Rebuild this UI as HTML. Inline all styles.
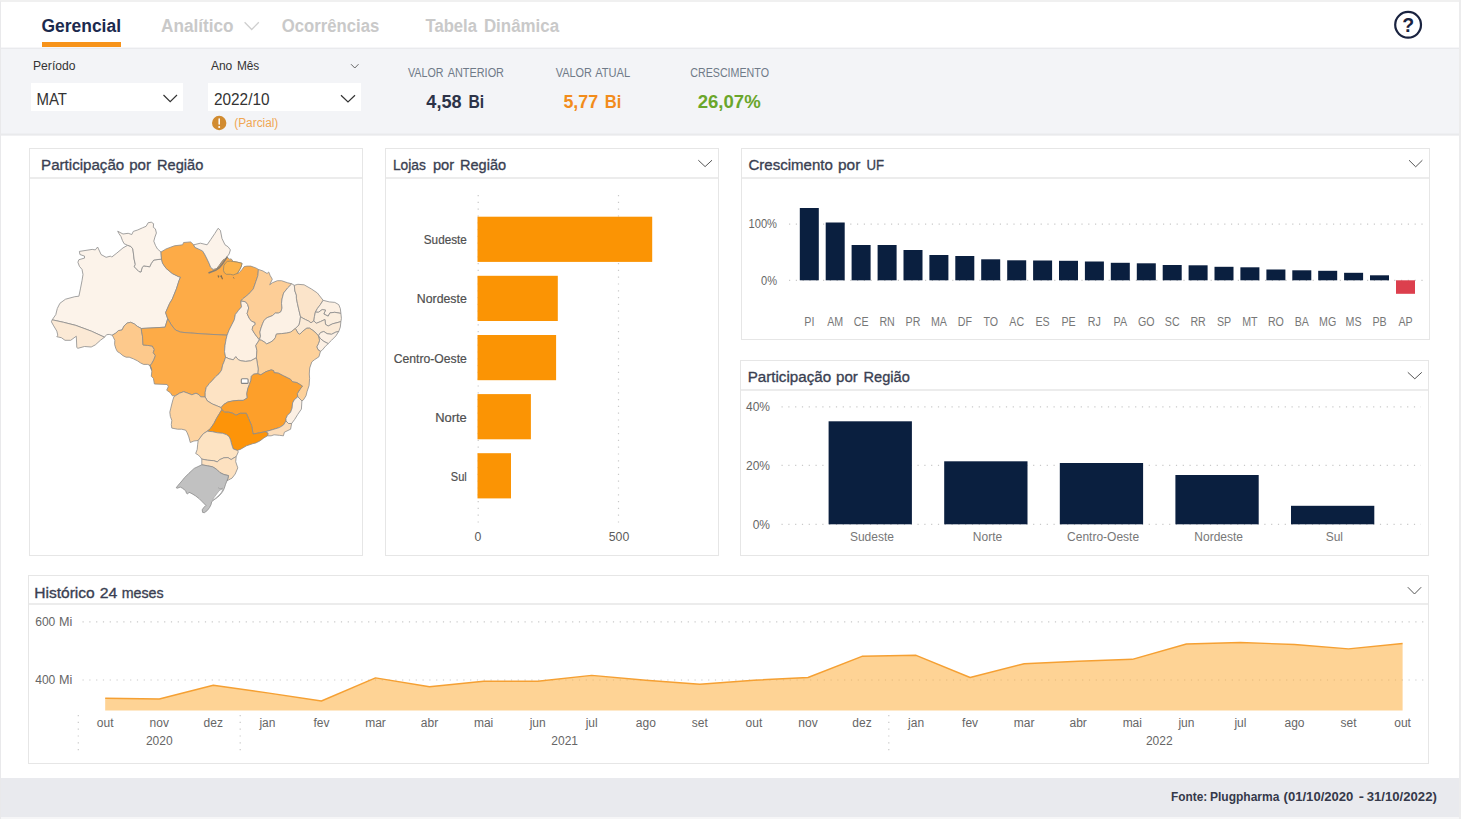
<!DOCTYPE html>
<html lang="pt-BR">
<head>
<meta charset="utf-8">
<title>Gerencial</title>
<style>
*{box-sizing:border-box;margin:0;padding:0}
html,body{width:1461px;height:819px;overflow:hidden;background:#fff}
body{font-family:"Liberation Sans", sans-serif;position:relative;color:#333}
.abs{position:absolute}
#frame{position:absolute;left:0;top:0;width:1461px;height:819px;border-top:2px solid #f0f0f0;border-left:1px solid #e9e9eb;z-index:50}
#redge{position:absolute;left:1459px;top:0;width:2px;height:819px;background:#ececed;z-index:51}
#band{position:absolute;left:0;top:47px;width:1461px;height:89px;background:#f3f4f7}
#band i{position:absolute;left:0;width:1461px;height:1px;display:block}
#footer{position:absolute;left:0;top:777.5px;width:1461px;height:39.5px;background:#e9eaee}
#bedge{position:absolute;left:0;top:817px;width:1461px;height:2px;background:#f6f6f7}
.dd{position:absolute;background:#fff;height:28px;top:83px}
.panel{position:absolute;border:1px solid #e6e6e6;background:#fff}
.ptitle{position:absolute;left:0;top:0;right:0;height:30px;border-bottom:2px solid #ececec}
svg{position:absolute;left:0;top:0;overflow:visible}
svg text{font-family:"Liberation Sans", sans-serif;white-space:pre}
</style>
</head>
<body>
<div class="abs" style="left:42px;top:42px;width:79px;height:5px;background:#f7931a"></div>
<div id="band"><i style="top:0;background:#f6f6f8"></i><i style="top:1px;background:#e9eaed"></i><i style="top:86px;background:#eeeff2"></i><i style="top:87px;background:#e9eaec"></i><i style="top:88px;background:#f1f1f3"></i></div>
<div class="dd" style="left:31px;width:152px"></div>
<div class="dd" style="left:208px;width:153px"></div>
<div class="panel" style="left:29px;top:148px;width:334px;height:408px"><div class="ptitle"></div></div>
<div class="panel" style="left:385px;top:148px;width:334px;height:408px"><div class="ptitle"></div></div>
<div class="panel" style="left:741px;top:148px;width:689px;height:192px"><div class="ptitle"></div></div>
<div class="panel" style="left:740px;top:360px;width:689px;height:196px"><div class="ptitle"></div></div>
<div class="panel" style="left:28px;top:575px;width:1401px;height:189px"><div class="ptitle" style="height:29px"></div></div>
<div id="footer"></div><div id="bedge"></div>
<svg width="1461" height="819" viewBox="0 0 1461 819">
<g stroke="#8c8c8c" stroke-width="0.8" stroke-linejoin="round">
<path d="M52.2,319.8 L55.8,314.6 L57.3,308.5 L59.9,303.3 L65.5,299.2 L74.8,296.7 L78.9,296.2 L80.4,288.9 L82.0,280.7 L83.0,274.5 L82.0,269.4 L79.4,266.3 L77.9,262.2 L78.9,259.7 L84.5,258.1 L84.5,256.1 L79.9,254.5 L79.4,251.4 L92.2,249.4 L95.3,249.9 L97.6,247.0 L100.4,253.0 L101.0,254.5 L106.1,257.3 L110.7,256.1 L111.7,257.1 L116.9,253.0 L123.0,247.9 L127.6,245.3 L130.7,246.3 L132.8,248.9 L133.5,254.0 L134.1,259.1 L135.3,264.3 L134.3,266.8 L136.4,268.9 L138.9,271.5 L141.0,272.0 L142.0,267.9 L143.6,265.8 L146.6,266.3 L149.7,266.8 L151.3,263.3 L153.8,260.0 L161.5,259.1 L162.6,263.3 L166.1,268.4 L172.3,273.5 L178.5,276.6 L180.5,277.1 L179.0,280.7 L176.4,288.9 L172.3,299.0 L169.7,303.3 L165.6,312.6 L167.7,318.7 L165.1,327.2 L141.3,328.5 L137.4,326.4 L134.3,323.9 L130.7,322.3 L127.1,323.1 L124.1,325.9 L122.0,330.0 L118.4,330.6 L115.8,333.1 L112.2,335.2 L109.2,334.4 L106.6,334.7 L104.5,337.2 L91.2,331.1 L75.8,325.4 L63.5,322.3 L52.2,319.8Z" fill="#fcf3ea"/>
<path d="M127.6,245.3 L124.1,243.7 L122.5,240.7 L121.0,236.6 L118.9,233.5 L117.7,231.2 L123.0,234.0 L128.2,233.3 L131.8,234.5 L133.3,231.4 L137.9,229.9 L142.5,227.8 L146.1,226.3 L148.2,222.7 L151.3,222.2 L153.6,223.7 L153.3,227.3 L155.4,228.9 L156.4,233.0 L154.9,237.1 L153.8,241.2 L155.4,245.3 L157.4,248.9 L161.0,252.0 L161.5,259.1 L153.8,260.0 L151.3,263.3 L149.7,266.8 L146.6,266.3 L143.6,265.8 L142.0,267.9 L141.0,272.0 L138.9,271.5 L136.4,268.9 L134.3,266.8 L135.3,264.3 L134.1,259.1 L133.5,254.0 L132.8,248.9 L130.7,246.3 L127.6,245.3Z" fill="#fcf3ea"/>
<path d="M52.2,319.8 L63.5,322.3 L75.8,325.4 L91.2,331.1 L104.5,337.2 L100.4,340.3 L95.3,344.9 L91.2,347.0 L84.5,346.5 L77.9,348.3 L76.8,347.5 L76.3,336.2 L70.7,340.3 L65.0,340.3 L61.4,337.7 L56.8,336.7 L57.8,335.2 L56.8,331.1 L53.7,325.9 L51.4,321.8 L52.2,319.8Z" fill="#fbe9d5"/>
<path d="M112.2,335.2 L115.8,333.1 L118.4,330.6 L122.0,330.0 L124.1,325.9 L127.1,323.1 L130.7,322.3 L134.3,323.9 L137.4,326.4 L141.3,328.5 L141.5,331.1 L142.5,336.2 L143.0,344.9 L147.7,345.4 L152.3,346.0 L154.3,349.5 L153.3,352.6 L155.4,355.7 L153.8,359.8 L151.8,363.4 L150.2,365.5 L147.7,364.4 L143.6,364.4 L140.5,362.9 L137.4,360.8 L133.3,358.8 L129.2,357.2 L126.1,357.2 L123.0,355.7 L119.9,353.1 L117.4,351.6 L115.8,348.5 L114.6,344.4 L114.8,340.3 L113.3,337.2 L112.2,335.2Z" fill="#fdc98c"/>
<path d="M161.0,252.0 L166.1,248.9 L174.4,245.8 L182.6,244.8 L183.6,242.5 L190.8,241.9 L191.2,242.5 L193.7,244.8 L194.8,247.3 L198.3,248.9 L202.5,250.9 L204.5,254.0 L206.6,258.1 L209.1,263.3 L210.7,267.4 L213.2,269.4 L217.1,266.5 L220.5,261.6 L223.4,258.2 L226.4,256.2 L229.3,259.2 L231.2,258.9 L233.2,261.5 L237.1,262.1 L242.0,263.3 L241.4,266.0 L240.1,268.9 L238.2,271.9 L237.0,273.7 L239.1,272.6 L241.9,269.7 L244.2,266.6 L246.9,266.1 L250.7,266.1 L255.8,267.9 L258.4,269.4 L257.9,275.6 L255.8,281.7 L253.3,288.9 L248.7,294.1 L242.5,299.0 L241.0,300.8 L241.0,303.3 L241.5,306.9 L238.4,310.5 L235.3,314.6 L234.3,319.8 L231.7,324.9 L229.1,330.0 L227.1,335.2 L205.5,334.1 L185.0,332.6 L180.5,332.1 L175.4,330.0 L171.3,324.9 L167.7,318.7 L165.6,312.6 L169.7,303.3 L172.3,299.0 L176.4,288.9 L179.0,280.7 L180.5,277.1 L178.5,276.6 L172.3,273.5 L166.1,268.4 L162.6,263.3 L161.5,259.1 L161.0,252.0Z" fill="#fdab47"/>
<path d="M193.7,244.8 L200.4,243.2 L207.1,244.8 L210.7,239.6 L214.8,233.5 L218.1,228.3 L220.4,230.4 L222.0,238.6 L225.0,244.8 L228.1,246.8 L230.4,249.9 L229.1,254.0 L226.1,258.1 L223.0,260.2 L219.9,265.3 L216.8,268.4 L213.2,269.4 L210.7,267.4 L209.1,263.3 L206.6,258.1 L204.5,254.0 L202.5,250.9 L198.3,248.9 L194.8,247.3 L193.7,244.8Z" fill="#fcf3ea"/>
<path d="M141.3,328.5 L165.1,327.2 L167.7,318.7 L171.3,324.9 L175.4,330.0 L180.5,332.1 L185.0,332.6 L205.5,334.1 L227.1,335.2 L226.1,339.3 L225.0,345.4 L224.5,351.6 L225.6,357.2 L224.0,361.9 L222.7,364.9 L221.6,370.1 L219.1,373.7 L215.5,376.8 L212.4,380.4 L209.3,383.5 L206.2,387.6 L205.2,392.2 L205.2,397.0 L200.6,396.8 L199.1,394.8 L196.0,393.2 L191.9,394.8 L187.8,393.2 L183.7,391.7 L179.5,393.2 L175.4,395.8 L172.4,395.8 L170.3,392.7 L166.7,390.2 L168.3,386.6 L167.2,384.5 L154.4,384.0 L153.4,378.3 L151.3,376.3 L151.8,371.2 L149.8,365.0 L151.8,370.1 L150.2,365.5 L151.8,363.4 L153.8,359.8 L155.4,355.7 L153.3,352.6 L154.3,349.5 L152.3,346.0 L147.7,345.4 L143.0,344.9 L142.5,336.2 L141.5,331.1 L141.3,328.5Z" fill="#fdab47"/>
<path d="M241.0,300.8 L241.0,303.3 L241.5,306.9 L238.4,310.5 L235.3,314.6 L234.3,319.8 L231.7,324.9 L229.1,330.0 L227.1,335.2 L226.1,339.3 L225.0,345.4 L224.5,351.6 L225.6,357.2 L229.1,358.8 L233.3,359.8 L235.8,356.7 L238.4,359.8 L241.0,360.8 L245.6,361.4 L250.7,360.8 L256.4,357.8 L256.9,350.6 L255.8,345.4 L259.4,339.8 L256.9,336.7 L254.3,333.1 L252.2,329.5 L252.8,326.4 L255.3,324.4 L254.8,322.3 L251.7,321.3 L249.2,318.2 L247.1,313.6 L248.7,308.0 L247.6,304.4 L245.6,301.8 L241.0,300.8Z" fill="#fdf0e2"/>
<path d="M258.4,269.4 L263.0,271.0 L267.1,273.5 L268.7,272.0 L270.2,275.6 L272.3,279.2 L269.7,284.8 L272.3,282.8 L277.4,280.7 L281.5,280.7 L287.7,282.8 L291.8,283.8 L287.7,287.9 L283.6,293.0 L282.0,299.0 L281.5,303.3 L282.0,308.0 L281.0,311.6 L278.4,313.1 L275.3,313.1 L272.3,315.7 L267.1,317.7 L264.1,320.3 L262.5,323.9 L261.0,328.0 L259.9,332.1 L260.5,336.2 L259.4,339.8 L256.9,336.7 L254.3,333.1 L252.2,329.5 L252.8,326.4 L255.3,324.4 L254.8,322.3 L251.7,321.3 L249.2,318.2 L247.1,313.6 L248.7,308.0 L247.6,304.4 L245.6,301.8 L241.0,300.8 L242.5,299.0 L248.7,294.1 L253.3,288.9 L255.8,281.7 L257.9,275.6 L258.4,269.4Z" fill="#fdce97"/>
<path d="M291.8,283.8 L294.3,285.3 L294.9,291.0 L296.4,295.1 L296.4,298.2 L297.4,303.3 L299.0,310.5 L300.5,316.7 L300.0,320.8 L299.0,324.9 L295.4,328.5 L290.7,332.1 L286.6,333.1 L281.5,333.6 L276.4,334.1 L275.3,337.7 L273.3,340.3 L270.2,342.4 L266.6,343.9 L264.1,341.8 L261.5,340.3 L259.4,339.8 L260.5,336.2 L259.9,332.1 L261.0,328.0 L262.5,323.9 L264.1,320.3 L267.1,317.7 L272.3,315.7 L275.3,313.1 L278.4,313.1 L281.0,311.6 L282.0,308.0 L281.5,303.3 L282.0,299.0 L283.6,293.0 L287.7,287.9 L291.8,283.8Z" fill="#fcf1e5"/>
<path d="M294.3,285.3 L297.9,284.3 L304.1,284.8 L311.3,288.9 L317.4,293.0 L323.1,300.3 L320.5,304.4 L317.4,308.5 L315.4,312.1 L314.4,316.7 L313.9,320.8 L311.0,322.8 L308.5,321.0 L305.5,319.6 L302.8,318.2 L300.5,316.7 L299.0,310.5 L297.4,303.3 L296.4,298.2 L296.4,295.1 L294.9,291.0 L294.3,285.3Z" fill="#fbe4ca"/>
<path d="M323.1,300.3 L329.3,301.9 L334.8,302.4 L338.7,304.6 L340.3,308.5 L340.9,313.4 L334.8,312.3 L329.9,312.9 L328.2,316.2 L323.8,314.0 L325.5,310.1 L322.2,309.6 L318.4,312.3 L315.4,312.1 L317.4,308.5 L320.5,304.4 L323.1,300.3Z" fill="#fcf0e3"/>
<path d="M315.4,312.1 L318.4,312.3 L322.2,309.6 L325.5,310.1 L323.8,314.0 L328.2,316.2 L329.9,312.9 L334.8,312.3 L340.9,313.4 L341.4,318.4 L340.9,321.6 L337.0,322.7 L332.6,323.8 L328.2,326.0 L325.5,324.4 L324.9,319.5 L320.5,321.6 L316.2,323.3 L313.9,320.8 L314.4,316.7 L315.4,312.1Z" fill="#fbeede"/>
<path d="M313.9,320.8 L316.2,323.3 L320.5,321.6 L324.9,319.5 L325.5,324.4 L328.2,326.0 L332.6,323.8 L337.0,322.7 L340.9,321.6 L340.3,327.1 L338.7,331.5 L335.9,332.1 L331.5,334.3 L327.1,333.7 L323.8,331.5 L320.5,332.6 L318.4,335.9 L316.2,333.2 L312.9,330.4 L309.6,328.2 L306.8,328.2 L303.0,331.0 L299.7,334.3 L298.0,333.2 L295.4,328.5 L299.0,324.9 L300.0,320.8 L300.5,316.7 L302.8,318.2 L305.5,319.6 L308.5,321.0 L311.0,322.8 L313.9,320.8Z" fill="#fbead6"/>
<path d="M318.4,335.9 L320.5,332.6 L323.8,331.5 L327.1,333.7 L331.5,334.3 L335.9,332.1 L338.7,331.5 L335.9,335.9 L331.5,340.3 L328.2,343.6 L323.8,341.4 L320.5,338.7 L318.4,335.9Z" fill="#fcf0e4"/>
<path d="M318.4,335.9 L320.5,338.7 L323.8,341.4 L328.2,343.6 L324.9,346.9 L322.2,350.2 L320.5,351.3 L318.4,350.2 L316.7,346.9 L318.4,343.6 L319.5,340.3 L318.4,335.9Z" fill="#fcf0e4"/>
<path d="M259.4,339.8 L261.5,340.3 L264.1,341.8 L266.6,343.9 L270.2,342.4 L273.3,340.3 L275.3,337.7 L276.4,334.1 L281.5,333.6 L286.6,333.1 L290.7,332.1 L295.4,328.5 L298.0,333.2 L299.7,334.3 L303.0,331.0 L306.8,328.2 L309.6,328.2 L312.9,330.4 L316.2,333.2 L318.4,335.9 L319.5,340.3 L318.4,343.6 L316.7,346.9 L318.4,350.2 L320.5,351.3 L318.9,356.8 L314.4,359.8 L311.8,361.9 L309.7,368.0 L309.3,374.0 L309.6,378.3 L309.1,385.5 L307.0,391.7 L306.0,395.8 L303.4,399.9 L301.9,400.9 L297.8,396.8 L297.2,393.7 L299.8,389.6 L302.4,386.0 L300.8,385.0 L296.7,382.5 L292.6,381.9 L290.6,379.4 L287.5,377.8 L283.4,375.8 L278.3,373.2 L274.1,372.7 L273.6,370.6 L271.1,369.9 L265.9,371.7 L260.8,374.8 L257.7,373.7 L258.2,369.1 L257.4,363.9 L256.4,357.8 L256.9,350.6 L255.8,345.4 L259.4,339.8Z" fill="#fdd19b"/>
<path d="M256.4,357.8 L250.7,360.8 L245.6,361.4 L241.0,360.8 L238.4,359.8 L235.8,356.7 L233.3,359.8 L229.1,358.8 L225.6,357.2 L224.0,361.9 L222.7,364.9 L221.6,370.1 L219.1,373.7 L215.5,376.8 L212.4,380.4 L209.3,383.5 L206.2,387.6 L205.2,392.2 L205.2,397.0 L207.3,400.9 L212.4,404.0 L217.5,406.1 L221.1,407.6 L223.7,404.5 L227.8,402.0 L232.9,400.9 L238.1,400.4 L243.2,400.4 L247.3,397.9 L246.8,393.7 L247.8,388.6 L249.4,384.5 L250.9,380.4 L251.4,376.3 L253.5,374.2 L257.7,373.7 L258.2,369.1 L257.4,363.9 L256.4,357.8Z" fill="#fde3c4"/>
<path d="M175.4,395.8 L179.5,393.2 L183.7,391.7 L187.8,393.2 L191.9,394.8 L196.0,393.2 L199.1,394.8 L200.6,396.8 L205.2,397.0 L207.3,400.9 L212.4,404.0 L217.5,406.1 L221.1,407.6 L221.8,409.7 L219.6,413.3 L216.5,418.4 L213.9,423.5 L210.3,428.7 L207.3,431.2 L203.2,433.8 L200.1,437.9 L198.2,440.5 L193.9,441.0 L190.3,442.5 L188.8,436.9 L187.2,432.8 L185.7,430.2 L181.6,429.2 L177.5,429.2 L171.8,428.1 L171.3,424.5 L171.8,420.4 L170.3,416.3 L169.8,412.2 L170.8,408.1 L171.8,404.0 L172.9,399.9 L173.9,396.8 L175.4,395.8Z" fill="#fdd3a0"/>
<path d="M257.7,373.7 L253.5,374.2 L251.4,376.3 L250.9,380.4 L249.4,384.5 L247.8,388.6 L246.8,393.7 L247.3,397.9 L243.2,400.4 L238.1,400.4 L232.9,400.9 L227.8,402.0 L223.7,404.5 L221.1,407.6 L221.8,409.7 L224.7,412.2 L228.8,412.2 L232.9,413.3 L236.0,415.3 L240.1,413.3 L246.3,413.3 L248.5,418.4 L251.6,425.6 L253.1,434.0 L259.8,432.8 L265.4,431.7 L269.0,430.7 L274.1,429.2 L279.3,427.6 L283.4,425.1 L286.0,421.0 L286.0,418.4 L287.5,415.3 L290.6,412.2 L292.1,408.1 L292.6,403.0 L294.2,399.9 L297.8,396.8 L297.2,393.7 L299.8,389.6 L302.4,386.0 L300.8,385.0 L296.7,382.5 L292.6,381.9 L290.6,379.4 L287.5,377.8 L283.4,375.8 L278.3,373.2 L274.1,372.7 L273.6,370.6 L271.1,369.9 L265.9,371.7 L260.8,374.8 L257.7,373.7Z" fill="#fd9f2a"/>
<path d="M297.8,396.8 L301.9,400.9 L301.4,409.1 L297.8,414.3 L294.7,419.4 L291.6,423.5 L288.5,423.5 L286.0,421.0 L286.0,418.4 L287.5,415.3 L290.6,412.2 L292.1,408.1 L292.6,403.0 L294.2,399.9 L297.8,396.8Z" fill="#fcf0e4"/>
<path d="M286.0,421.0 L283.4,425.1 L279.3,427.6 L274.1,429.2 L269.0,430.7 L265.4,431.7 L268.0,433.3 L267.5,435.8 L271.1,435.8 L274.1,434.8 L279.3,435.3 L283.4,435.8 L284.4,432.2 L290.6,429.2 L291.6,423.5 L288.5,423.5 L286.0,421.0Z" fill="#fcddba"/>
<path d="M207.3,431.2 L210.3,428.7 L213.9,423.5 L216.5,418.4 L219.6,413.3 L221.8,409.7 L224.7,412.2 L228.8,412.2 L232.9,413.3 L236.0,415.3 L240.1,413.3 L246.3,413.3 L248.5,418.4 L251.6,425.6 L253.1,434.0 L259.8,432.8 L265.4,431.7 L268.0,433.3 L267.5,435.8 L263.9,437.9 L259.8,441.0 L255.7,443.0 L252.7,443.7 L246.5,445.8 L240.3,449.4 L237.3,450.4 L233.2,448.9 L231.6,444.2 L230.6,440.1 L229.3,436.9 L226.8,434.8 L222.7,433.3 L217.5,432.8 L212.4,431.7 L207.3,431.2Z" fill="#fd9409"/>
<path d="M198.2,440.5 L200.1,437.9 L203.2,433.8 L207.3,431.2 L212.4,431.7 L217.5,432.8 L222.7,433.3 L226.8,434.8 L229.3,436.9 L230.6,440.1 L231.6,444.2 L233.2,448.9 L237.3,450.4 L238.3,451.9 L236.2,456.6 L235.2,457.1 L231.1,459.6 L228.0,457.6 L223.9,457.8 L219.8,459.6 L217.2,461.9 L213.7,460.7 L207.5,460.2 L201.8,459.1 L200.3,457.1 L198.3,455.0 L195.7,453.5 L197.2,449.4 L197.7,444.2 L198.2,440.5Z" fill="#fde3c2"/>
<path d="M201.8,459.1 L207.5,460.2 L213.7,460.7 L217.2,461.9 L219.8,459.6 L223.9,457.8 L228.0,457.6 L231.1,459.6 L235.2,457.1 L236.2,456.6 L235.7,461.7 L237.8,467.9 L235.2,474.0 L232.1,478.1 L227.0,480.7 L228.0,478.1 L228.5,475.6 L223.9,474.5 L219.8,472.5 L216.7,469.4 L212.6,466.8 L207.5,465.8 L201.8,464.8 L201.8,459.1Z" fill="#fde1c0"/>
<path d="M201.8,464.8 L207.5,465.8 L212.6,466.8 L216.7,469.4 L219.8,472.5 L223.9,474.5 L228.5,475.6 L228.0,478.1 L227.0,480.7 L225.6,484.2 L224.2,488.6 L222.7,491.5 L220.5,494.4 L217.6,497.3 L213.9,499.9 L211.7,501.7 L211.0,504.7 L209.5,507.6 L207.3,510.5 L204.4,512.7 L202.6,512.4 L202.2,509.8 L203.7,507.6 L205.9,505.4 L204.4,503.9 L202.2,501.7 L199.3,498.8 L195.6,495.9 L192.0,493.7 L189.0,492.2 L187.6,494.0 L186.5,493.3 L185.7,490.8 L182.4,488.2 L180.3,487.1 L177.3,488.2 L176.2,487.8 L178.1,485.3 L181.0,482.0 L184.6,477.6 L189.0,473.2 L194.2,468.4 L201.8,464.8Z" fill="#c1c1c1"/>
<rect x="241.3" y="378.8" width="6.8" height="4.6" rx="1" fill="#fff" stroke="#858585" stroke-width="1.1"/>
<path d="M212.8,499.2 L214.7,496.6 L216.9,493.7 L219.1,490.8 L221.3,489.3 L222.4,490.4 L221.3,492.6 L219.1,495.1 L216.1,497.7 L213.9,499.5Z" fill="#fff" stroke="#9a9a9a" stroke-width="0.6"/>
<path d="M218.0,487.5 L219.8,488.9 L222.9,488.2" fill="none" stroke="#9a9a9a" stroke-width="0.7"/>
<path d="M227.3,261.4 L230.3,261.1 L233.2,261.5 L237.1,262.1 L242.0,263.3 L241.4,266.0 L240.1,268.9 L238.2,271.9 L237.0,273.7 L236.1,273.8 L233.2,275.0 L230.3,274.3 L226.4,274.3 L224.4,272.8 L223.4,270.4 L223.9,265.5 L225.4,263.1Z" fill="#fdb34a" stroke="#93866c" stroke-width="0.8"/>
<path d="M208.5,273.1 L212.2,271.6 L216.1,269.9 L219.5,267.5 L222.0,264.5 L225.4,259.6 L227.3,256.7" fill="none" stroke="#857d72" stroke-width="1.6"/>
<path d="M216.1,269.4 L218.8,265.8 L221.5,262.1 L224.4,258.9" fill="none" stroke="#9c8f7c" stroke-width="1.0"/>
<path d="M218.1,275.3 L218.6,277.5" fill="none" stroke="#7a6a50" stroke-width="1.1"/>
<path d="M221.0,275.3 L222.5,279.2" fill="none" stroke="#7a6a50" stroke-width="1.1"/>
<path d="M219.5,276.2 L221.5,277.0" fill="none" stroke="#8a7a60" stroke-width="0.8"/>
<path d="M233.2,277.0 L234.2,278.7" fill="none" stroke="#8a7a60" stroke-width="0.8"/>
</g>
<text x="41.5" y="32.0" font-size="18" font-weight="bold" textLength="79.5" lengthAdjust="spacingAndGlyphs" fill="#1c2a4e">Gerencial</text>
<text x="161.0" y="31.8" font-size="18" font-weight="bold" textLength="72.5" lengthAdjust="spacingAndGlyphs" fill="#c9c9c9">Analítico</text>
<text x="281.8" y="31.8" font-size="18" font-weight="bold" textLength="97.5" lengthAdjust="spacingAndGlyphs" fill="#c9c9c9">Ocorrências</text>
<text x="425.5" y="31.8" font-size="18" font-weight="bold" textLength="51.5" lengthAdjust="spacingAndGlyphs" fill="#c9c9c9">Tabela</text>
<text x="483.9" y="31.8" font-size="18" font-weight="bold" textLength="75.2" lengthAdjust="spacingAndGlyphs" fill="#c9c9c9">Dinâmica</text>
<polyline points="244.6,22.2 251.7,29.5 258.8,22.2" fill="none" stroke="#cfcfcf" stroke-width="1.3" stroke-linecap="butt"/>
<circle cx="1408.1" cy="24.8" r="12.9" fill="#fff" stroke="#1a2340" stroke-width="2.2"/>
<text x="1408.1" y="32.3" font-size="19.5" font-weight="bold" text-anchor="middle" fill="#1a2340">?</text>
<text x="33.0" y="70.0" font-size="12" textLength="42.5" lengthAdjust="spacingAndGlyphs" fill="#333">Período</text>
<text x="210.9" y="70.0" font-size="12" textLength="21.4" lengthAdjust="spacingAndGlyphs" fill="#333">Ano</text>
<text x="236.9" y="70.0" font-size="12" textLength="22.4" lengthAdjust="spacingAndGlyphs" fill="#333">Mês</text>
<polyline points="351.0,64.2 354.8,68.0 358.5,64.2" fill="none" stroke="#666" stroke-width="1.0" stroke-linecap="butt"/>
<text x="36.5" y="104.8" font-size="16" textLength="30.5" lengthAdjust="spacingAndGlyphs" fill="#333">MAT</text>
<text x="214.0" y="104.8" font-size="16" textLength="55.5" lengthAdjust="spacingAndGlyphs" fill="#333">2022/10</text>
<polyline points="163.5,95.0 170.2,101.7 177.0,95.0" fill="none" stroke="#333" stroke-width="1.2" stroke-linecap="butt"/>
<polyline points="341.0,95.3 348.0,102.0 355.0,95.3" fill="none" stroke="#333" stroke-width="1.2" stroke-linecap="butt"/>
<circle cx="219.2" cy="123" r="7.2" fill="#d18b30"/>
<rect x="218.45" y="118.2" width="1.5" height="6.6" rx="0.7" fill="#fff"/><circle cx="219.2" cy="127" r="1.0" fill="#fff"/>
<text x="234.3" y="126.6" font-size="12" textLength="44.0" lengthAdjust="spacingAndGlyphs" fill="#f0a653">(Parcial)</text>
<text x="408.0" y="76.8" font-size="12" textLength="35.5" lengthAdjust="spacingAndGlyphs" fill="#6f7a88">VALOR</text>
<text x="447.7" y="76.8" font-size="12" textLength="56.3" lengthAdjust="spacingAndGlyphs" fill="#6f7a88">ANTERIOR</text>
<text x="555.7" y="76.8" font-size="12" textLength="36.2" lengthAdjust="spacingAndGlyphs" fill="#6f7a88">VALOR</text>
<text x="595.2" y="76.8" font-size="12" textLength="35.0" lengthAdjust="spacingAndGlyphs" fill="#6f7a88">ATUAL</text>
<text x="690.2" y="76.8" font-size="12" textLength="78.8" lengthAdjust="spacingAndGlyphs" fill="#6f7a88">CRESCIMENTO</text>
<text x="426.3" y="107.7" font-size="17.5" font-weight="bold" textLength="35.3" lengthAdjust="spacingAndGlyphs" fill="#2c3348">4,58</text>
<text x="468.5" y="107.7" font-size="17.5" font-weight="bold" textLength="15.7" lengthAdjust="spacingAndGlyphs" fill="#2c3348">Bi</text>
<text x="563.4" y="107.7" font-size="17.5" font-weight="bold" textLength="34.7" lengthAdjust="spacingAndGlyphs" fill="#f28c1c">5,77</text>
<text x="604.7" y="107.7" font-size="17.5" font-weight="bold" textLength="16.6" lengthAdjust="spacingAndGlyphs" fill="#f28c1c">Bi</text>
<text x="697.7" y="107.7" font-size="17.5" font-weight="bold" textLength="63.0" lengthAdjust="spacingAndGlyphs" fill="#6aa62b">26,07%</text>
<text x="41.1" y="170.0" font-size="15.5" textLength="83.1" lengthAdjust="spacingAndGlyphs" fill="#3a3f52" stroke="#3a3f52" stroke-width="0.35">Participação</text>
<text x="129.2" y="170.0" font-size="15.5" textLength="21.8" lengthAdjust="spacingAndGlyphs" fill="#3a3f52" stroke="#3a3f52" stroke-width="0.35">por</text>
<text x="157.0" y="170.0" font-size="15.5" textLength="46.3" lengthAdjust="spacingAndGlyphs" fill="#3a3f52" stroke="#3a3f52" stroke-width="0.35">Região</text>
<text x="392.9" y="170.0" font-size="15.5" textLength="32.9" lengthAdjust="spacingAndGlyphs" fill="#3a3f52" stroke="#3a3f52" stroke-width="0.35">Lojas</text>
<text x="432.9" y="170.0" font-size="15.5" textLength="21.2" lengthAdjust="spacingAndGlyphs" fill="#3a3f52" stroke="#3a3f52" stroke-width="0.35">por</text>
<text x="460.0" y="170.0" font-size="15.5" textLength="46.1" lengthAdjust="spacingAndGlyphs" fill="#3a3f52" stroke="#3a3f52" stroke-width="0.35">Região</text>
<text x="748.5" y="170.0" font-size="15.5" textLength="84.3" lengthAdjust="spacingAndGlyphs" fill="#3a3f52" stroke="#3a3f52" stroke-width="0.35">Crescimento</text>
<text x="838.0" y="170.0" font-size="15.5" textLength="22.3" lengthAdjust="spacingAndGlyphs" fill="#3a3f52" stroke="#3a3f52" stroke-width="0.35">por</text>
<text x="866.5" y="170.0" font-size="15.5" textLength="17.6" lengthAdjust="spacingAndGlyphs" fill="#3a3f52" stroke="#3a3f52" stroke-width="0.35">UF</text>
<text x="747.7" y="381.8" font-size="15.5" textLength="83.4" lengthAdjust="spacingAndGlyphs" fill="#3a3f52" stroke="#3a3f52" stroke-width="0.35">Participação</text>
<text x="836.0" y="381.8" font-size="15.5" textLength="21.8" lengthAdjust="spacingAndGlyphs" fill="#3a3f52" stroke="#3a3f52" stroke-width="0.35">por</text>
<text x="863.5" y="381.8" font-size="15.5" textLength="46.3" lengthAdjust="spacingAndGlyphs" fill="#3a3f52" stroke="#3a3f52" stroke-width="0.35">Região</text>
<text x="34.2" y="597.5" font-size="15.5" textLength="60.6" lengthAdjust="spacingAndGlyphs" fill="#3a3f52" stroke="#3a3f52" stroke-width="0.35">Histórico</text>
<text x="99.7" y="597.5" font-size="15.5" textLength="17.6" lengthAdjust="spacingAndGlyphs" fill="#3a3f52" stroke="#3a3f52" stroke-width="0.35">24</text>
<text x="121.7" y="597.5" font-size="15.5" textLength="41.9" lengthAdjust="spacingAndGlyphs" fill="#3a3f52" stroke="#3a3f52" stroke-width="0.35">meses</text>
<polyline points="698.3,160.2 705.1,166.6 712.0,160.2" fill="none" stroke="#555" stroke-width="1.0" stroke-linecap="butt"/>
<polyline points="1409.0,160.2 1415.7,166.8 1422.4,160.2" fill="none" stroke="#555" stroke-width="1.0" stroke-linecap="butt"/>
<polyline points="1407.8,372.3 1414.8,378.8 1421.8,372.3" fill="none" stroke="#555" stroke-width="1.0" stroke-linecap="butt"/>
<polyline points="1407.8,587.2 1414.5,594.0 1421.2,587.2" fill="none" stroke="#555" stroke-width="1.0" stroke-linecap="butt"/>
<line x1="478.2" y1="195.0" x2="478.2" y2="524.0" stroke="#c9c9c9" stroke-width="1.2" stroke-dasharray="1.2 5.6" stroke-linecap="butt"/>
<line x1="618.5" y1="195.0" x2="618.5" y2="524.0" stroke="#c9c9c9" stroke-width="1.2" stroke-dasharray="1.2 5.6" stroke-linecap="butt"/>
<rect x="477.5" y="216.7" width="174.7" height="45.2" fill="#fb9404"/>
<text x="466.8" y="244.3" font-size="12.3" text-anchor="end" textLength="43.0" lengthAdjust="spacingAndGlyphs" fill="#4f4f4f" stroke="#4f4f4f" stroke-width="0.2">Sudeste</text>
<rect x="477.5" y="275.8" width="80.3" height="45.2" fill="#fb9404"/>
<text x="466.8" y="303.4" font-size="12.3" text-anchor="end" textLength="50.0" lengthAdjust="spacingAndGlyphs" fill="#4f4f4f" stroke="#4f4f4f" stroke-width="0.2">Nordeste</text>
<rect x="477.5" y="335.0" width="78.6" height="45.2" fill="#fb9404"/>
<text x="466.8" y="362.6" font-size="12.3" text-anchor="end" textLength="73.0" lengthAdjust="spacingAndGlyphs" fill="#4f4f4f" stroke="#4f4f4f" stroke-width="0.2">Centro-Oeste</text>
<rect x="477.5" y="394.1" width="53.4" height="45.2" fill="#fb9404"/>
<text x="466.8" y="421.7" font-size="12.3" text-anchor="end" textLength="31.6" lengthAdjust="spacingAndGlyphs" fill="#4f4f4f" stroke="#4f4f4f" stroke-width="0.2">Norte</text>
<rect x="477.5" y="453.2" width="33.5" height="45.2" fill="#fb9404"/>
<text x="466.8" y="480.8" font-size="12.3" text-anchor="end" textLength="16.0" lengthAdjust="spacingAndGlyphs" fill="#4f4f4f" stroke="#4f4f4f" stroke-width="0.2">Sul</text>
<text x="478.0" y="540.6" font-size="12.3" text-anchor="middle" fill="#5c5c5c">0</text>
<text x="619.0" y="540.6" font-size="12.3" text-anchor="middle" fill="#5c5c5c">500</text>
<line x1="789.0" y1="224.2" x2="1425.0" y2="224.2" stroke="#c9c9c9" stroke-width="1.2" stroke-dasharray="1.2 5.6" stroke-linecap="butt"/>
<line x1="789.0" y1="280.4" x2="1425.0" y2="280.4" stroke="#c9c9c9" stroke-width="1.2" stroke-dasharray="1.2 5.6" stroke-linecap="butt"/>
<text x="777.0" y="228.3" font-size="12" text-anchor="end" textLength="28.5" lengthAdjust="spacingAndGlyphs" fill="#666">100%</text>
<text x="777.0" y="284.6" font-size="12" text-anchor="end" textLength="16.0" lengthAdjust="spacingAndGlyphs" fill="#666">0%</text>
<rect x="799.8" y="208.0" width="19.0" height="72.3" fill="#0a1f3f"/>
<text x="809.3" y="325.5" font-size="12" text-anchor="middle" textLength="10.1" lengthAdjust="spacingAndGlyphs" fill="#777">PI</text>
<rect x="825.7" y="222.5" width="19.0" height="57.8" fill="#0a1f3f"/>
<text x="835.2" y="325.5" font-size="12" text-anchor="middle" textLength="16.0" lengthAdjust="spacingAndGlyphs" fill="#777">AM</text>
<rect x="851.6" y="245.0" width="19.0" height="35.3" fill="#0a1f3f"/>
<text x="861.1" y="325.5" font-size="12" text-anchor="middle" textLength="14.8" lengthAdjust="spacingAndGlyphs" fill="#777">CE</text>
<rect x="877.6" y="245.0" width="19.0" height="35.3" fill="#0a1f3f"/>
<text x="887.1" y="325.5" font-size="12" text-anchor="middle" textLength="15.4" lengthAdjust="spacingAndGlyphs" fill="#777">RN</text>
<rect x="903.5" y="250.0" width="19.0" height="30.3" fill="#0a1f3f"/>
<text x="913.0" y="325.5" font-size="12" text-anchor="middle" textLength="14.8" lengthAdjust="spacingAndGlyphs" fill="#777">PR</text>
<rect x="929.4" y="255.0" width="19.0" height="25.3" fill="#0a1f3f"/>
<text x="938.9" y="325.5" font-size="12" text-anchor="middle" textLength="16.0" lengthAdjust="spacingAndGlyphs" fill="#777">MA</text>
<rect x="955.3" y="256.0" width="19.0" height="24.3" fill="#0a1f3f"/>
<text x="964.8" y="325.5" font-size="12" text-anchor="middle" textLength="14.2" lengthAdjust="spacingAndGlyphs" fill="#777">DF</text>
<rect x="981.2" y="259.3" width="19.0" height="21.0" fill="#0a1f3f"/>
<text x="990.7" y="325.5" font-size="12" text-anchor="middle" textLength="14.6" lengthAdjust="spacingAndGlyphs" fill="#777">TO</text>
<rect x="1007.2" y="260.3" width="19.0" height="20.0" fill="#0a1f3f"/>
<text x="1016.7" y="325.5" font-size="12" text-anchor="middle" textLength="14.8" lengthAdjust="spacingAndGlyphs" fill="#777">AC</text>
<rect x="1033.1" y="260.5" width="19.0" height="19.8" fill="#0a1f3f"/>
<text x="1042.6" y="325.5" font-size="12" text-anchor="middle" textLength="14.2" lengthAdjust="spacingAndGlyphs" fill="#777">ES</text>
<rect x="1059.0" y="260.8" width="19.0" height="19.5" fill="#0a1f3f"/>
<text x="1068.5" y="325.5" font-size="12" text-anchor="middle" textLength="14.2" lengthAdjust="spacingAndGlyphs" fill="#777">PE</text>
<rect x="1084.9" y="261.5" width="19.0" height="18.8" fill="#0a1f3f"/>
<text x="1094.4" y="325.5" font-size="12" text-anchor="middle" textLength="13.1" lengthAdjust="spacingAndGlyphs" fill="#777">RJ</text>
<rect x="1110.8" y="262.8" width="19.0" height="17.5" fill="#0a1f3f"/>
<text x="1120.3" y="325.5" font-size="12" text-anchor="middle" textLength="13.5" lengthAdjust="spacingAndGlyphs" fill="#777">PA</text>
<rect x="1136.8" y="263.3" width="19.0" height="17.0" fill="#0a1f3f"/>
<text x="1146.3" y="325.5" font-size="12" text-anchor="middle" textLength="16.6" lengthAdjust="spacingAndGlyphs" fill="#777">GO</text>
<rect x="1162.7" y="265.0" width="19.0" height="15.3" fill="#0a1f3f"/>
<text x="1172.2" y="325.5" font-size="12" text-anchor="middle" textLength="14.8" lengthAdjust="spacingAndGlyphs" fill="#777">SC</text>
<rect x="1188.6" y="265.3" width="19.0" height="15.0" fill="#0a1f3f"/>
<text x="1198.1" y="325.5" font-size="12" text-anchor="middle" textLength="15.4" lengthAdjust="spacingAndGlyphs" fill="#777">RR</text>
<rect x="1214.5" y="266.8" width="19.0" height="13.5" fill="#0a1f3f"/>
<text x="1224.0" y="325.5" font-size="12" text-anchor="middle" textLength="14.2" lengthAdjust="spacingAndGlyphs" fill="#777">SP</text>
<rect x="1240.4" y="267.3" width="19.0" height="13.0" fill="#0a1f3f"/>
<text x="1249.9" y="325.5" font-size="12" text-anchor="middle" textLength="15.4" lengthAdjust="spacingAndGlyphs" fill="#777">MT</text>
<rect x="1266.4" y="269.5" width="19.0" height="10.8" fill="#0a1f3f"/>
<text x="1275.9" y="325.5" font-size="12" text-anchor="middle" textLength="16.0" lengthAdjust="spacingAndGlyphs" fill="#777">RO</text>
<rect x="1292.3" y="270.3" width="19.0" height="10.0" fill="#0a1f3f"/>
<text x="1301.8" y="325.5" font-size="12" text-anchor="middle" textLength="14.2" lengthAdjust="spacingAndGlyphs" fill="#777">BA</text>
<rect x="1318.2" y="270.8" width="19.0" height="9.5" fill="#0a1f3f"/>
<text x="1327.7" y="325.5" font-size="12" text-anchor="middle" textLength="17.2" lengthAdjust="spacingAndGlyphs" fill="#777">MG</text>
<rect x="1344.1" y="272.8" width="19.0" height="7.5" fill="#0a1f3f"/>
<text x="1353.6" y="325.5" font-size="12" text-anchor="middle" textLength="16.0" lengthAdjust="spacingAndGlyphs" fill="#777">MS</text>
<rect x="1370.0" y="275.3" width="19.0" height="5.0" fill="#0a1f3f"/>
<text x="1379.5" y="325.5" font-size="12" text-anchor="middle" textLength="14.2" lengthAdjust="spacingAndGlyphs" fill="#777">PB</text>
<rect x="1396.0" y="280.3" width="19.0" height="13.5" fill="#dc3f4d"/>
<text x="1405.5" y="325.5" font-size="12" text-anchor="middle" textLength="14.2" lengthAdjust="spacingAndGlyphs" fill="#777">AP</text>
<line x1="781.5" y1="406.8" x2="1421.0" y2="406.8" stroke="#c9c9c9" stroke-width="1.2" stroke-dasharray="1.2 5.6" stroke-linecap="butt"/>
<line x1="781.5" y1="465.4" x2="1421.0" y2="465.4" stroke="#c9c9c9" stroke-width="1.2" stroke-dasharray="1.2 5.6" stroke-linecap="butt"/>
<line x1="781.5" y1="524.3" x2="1421.0" y2="524.3" stroke="#c9c9c9" stroke-width="1.2" stroke-dasharray="1.2 5.6" stroke-linecap="butt"/>
<text x="770.0" y="411.0" font-size="12" text-anchor="end" fill="#666">40%</text>
<text x="770.0" y="469.6" font-size="12" text-anchor="end" fill="#666">20%</text>
<text x="770.0" y="528.5" font-size="12" text-anchor="end" fill="#666">0%</text>
<rect x="828.6" y="421.3" width="83.3" height="103.0" fill="#0a1f3f"/>
<text x="871.9" y="540.5" font-size="12" text-anchor="middle" fill="#777">Sudeste</text>
<rect x="944.2" y="461.3" width="83.3" height="63.0" fill="#0a1f3f"/>
<text x="987.5" y="540.5" font-size="12" text-anchor="middle" fill="#777">Norte</text>
<rect x="1059.8" y="463.0" width="83.3" height="61.3" fill="#0a1f3f"/>
<text x="1103.1" y="540.5" font-size="12" text-anchor="middle" fill="#777">Centro-Oeste</text>
<rect x="1175.4" y="475.0" width="83.3" height="49.3" fill="#0a1f3f"/>
<text x="1218.7" y="540.5" font-size="12" text-anchor="middle" fill="#777">Nordeste</text>
<rect x="1291.0" y="505.8" width="83.3" height="18.5" fill="#0a1f3f"/>
<text x="1334.3" y="540.5" font-size="12" text-anchor="middle" fill="#777">Sul</text>
<line x1="82.5" y1="621.8" x2="1425.0" y2="621.8" stroke="#c9c9c9" stroke-width="1.2" stroke-dasharray="1.2 5.6" stroke-linecap="butt"/>
<line x1="82.5" y1="680.0" x2="1425.0" y2="680.0" stroke="#c9c9c9" stroke-width="1.2" stroke-dasharray="1.2 5.6" stroke-linecap="butt"/>
<text x="35.2" y="626.0" font-size="12" textLength="20.1" lengthAdjust="spacingAndGlyphs" fill="#666">600</text>
<text x="59.0" y="626.0" font-size="12" textLength="13.3" lengthAdjust="spacingAndGlyphs" fill="#666">Mi</text>
<text x="35.2" y="684.2" font-size="12" textLength="20.1" lengthAdjust="spacingAndGlyphs" fill="#666">400</text>
<text x="59.0" y="684.2" font-size="12" textLength="13.3" lengthAdjust="spacingAndGlyphs" fill="#666">Mi</text>
<polygon points="105.2,710.5 105.2,698.2 159.3,699.0 213.3,685.3 267.4,692.9 321.4,701.0 375.5,677.9 429.5,686.7 483.6,681.3 537.7,681.3 591.7,675.4 645.8,680.3 699.8,684.3 753.9,680.2 808.0,677.5 862.0,656.3 916.1,655.3 970.1,677.5 1024.2,663.7 1078.2,661.2 1132.3,659.3 1186.4,644.0 1240.4,642.5 1294.5,644.5 1348.5,648.9 1402.6,643.5 1402.6,710.5" fill="#fda72b" fill-opacity="0.5"/>
<polyline points="105.2,698.2 159.3,699.0 213.3,685.3 267.4,692.9 321.4,701.0 375.5,677.9 429.5,686.7 483.6,681.3 537.7,681.3 591.7,675.4 645.8,680.3 699.8,684.3 753.9,680.2 808.0,677.5 862.0,656.3 916.1,655.3 970.1,677.5 1024.2,663.7 1078.2,661.2 1132.3,659.3 1186.4,644.0 1240.4,642.5 1294.5,644.5 1348.5,648.9 1402.6,643.5" fill="none" stroke="#f5a033" stroke-width="1.4" stroke-linejoin="round"/>
<text x="105.2" y="727.0" font-size="12" text-anchor="middle" fill="#666">out</text>
<text x="159.3" y="727.0" font-size="12" text-anchor="middle" fill="#666">nov</text>
<text x="213.3" y="727.0" font-size="12" text-anchor="middle" fill="#666">dez</text>
<text x="267.4" y="727.0" font-size="12" text-anchor="middle" fill="#666">jan</text>
<text x="321.4" y="727.0" font-size="12" text-anchor="middle" fill="#666">fev</text>
<text x="375.5" y="727.0" font-size="12" text-anchor="middle" fill="#666">mar</text>
<text x="429.5" y="727.0" font-size="12" text-anchor="middle" fill="#666">abr</text>
<text x="483.6" y="727.0" font-size="12" text-anchor="middle" fill="#666">mai</text>
<text x="537.7" y="727.0" font-size="12" text-anchor="middle" fill="#666">jun</text>
<text x="591.7" y="727.0" font-size="12" text-anchor="middle" fill="#666">jul</text>
<text x="645.8" y="727.0" font-size="12" text-anchor="middle" fill="#666">ago</text>
<text x="699.8" y="727.0" font-size="12" text-anchor="middle" fill="#666">set</text>
<text x="753.9" y="727.0" font-size="12" text-anchor="middle" fill="#666">out</text>
<text x="808.0" y="727.0" font-size="12" text-anchor="middle" fill="#666">nov</text>
<text x="862.0" y="727.0" font-size="12" text-anchor="middle" fill="#666">dez</text>
<text x="916.1" y="727.0" font-size="12" text-anchor="middle" fill="#666">jan</text>
<text x="970.1" y="727.0" font-size="12" text-anchor="middle" fill="#666">fev</text>
<text x="1024.2" y="727.0" font-size="12" text-anchor="middle" fill="#666">mar</text>
<text x="1078.2" y="727.0" font-size="12" text-anchor="middle" fill="#666">abr</text>
<text x="1132.3" y="727.0" font-size="12" text-anchor="middle" fill="#666">mai</text>
<text x="1186.4" y="727.0" font-size="12" text-anchor="middle" fill="#666">jun</text>
<text x="1240.4" y="727.0" font-size="12" text-anchor="middle" fill="#666">jul</text>
<text x="1294.5" y="727.0" font-size="12" text-anchor="middle" fill="#666">ago</text>
<text x="1348.5" y="727.0" font-size="12" text-anchor="middle" fill="#666">set</text>
<text x="1402.6" y="727.0" font-size="12" text-anchor="middle" fill="#666">out</text>
<text x="159.3" y="745.0" font-size="12" text-anchor="middle" fill="#666">2020</text>
<text x="564.7" y="745.0" font-size="12" text-anchor="middle" fill="#666">2021</text>
<text x="1159.3" y="745.0" font-size="12" text-anchor="middle" fill="#666">2022</text>
<line x1="78.3" y1="715.0" x2="78.3" y2="751.0" stroke="#c9c9c9" stroke-width="1.2" stroke-dasharray="1.2 5.6" stroke-linecap="butt"/>
<line x1="240.2" y1="715.0" x2="240.2" y2="751.0" stroke="#c9c9c9" stroke-width="1.2" stroke-dasharray="1.2 5.6" stroke-linecap="butt"/>
<line x1="888.8" y1="715.0" x2="888.8" y2="751.0" stroke="#c9c9c9" stroke-width="1.2" stroke-dasharray="1.2 5.6" stroke-linecap="butt"/>
<text x="1171.1" y="801.3" font-size="12" font-weight="bold" textLength="36.2" lengthAdjust="spacingAndGlyphs" fill="#35394a">Fonte:</text>
<text x="1210.0" y="801.3" font-size="12" font-weight="bold" textLength="69.4" lengthAdjust="spacingAndGlyphs" fill="#35394a">Plugpharma</text>
<text x="1283.6" y="801.3" font-size="12" font-weight="bold" textLength="69.8" lengthAdjust="spacingAndGlyphs" fill="#35394a">(01/10/2020</text>
<text x="1358.7" y="801.3" font-size="12" font-weight="bold" textLength="5.2" lengthAdjust="spacingAndGlyphs" fill="#35394a">-</text>
<text x="1366.7" y="801.3" font-size="12" font-weight="bold" textLength="70.2" lengthAdjust="spacingAndGlyphs" fill="#35394a">31/10/2022)</text>
</svg>
<div id="frame"></div><div id="redge"></div>
</body>
</html>
